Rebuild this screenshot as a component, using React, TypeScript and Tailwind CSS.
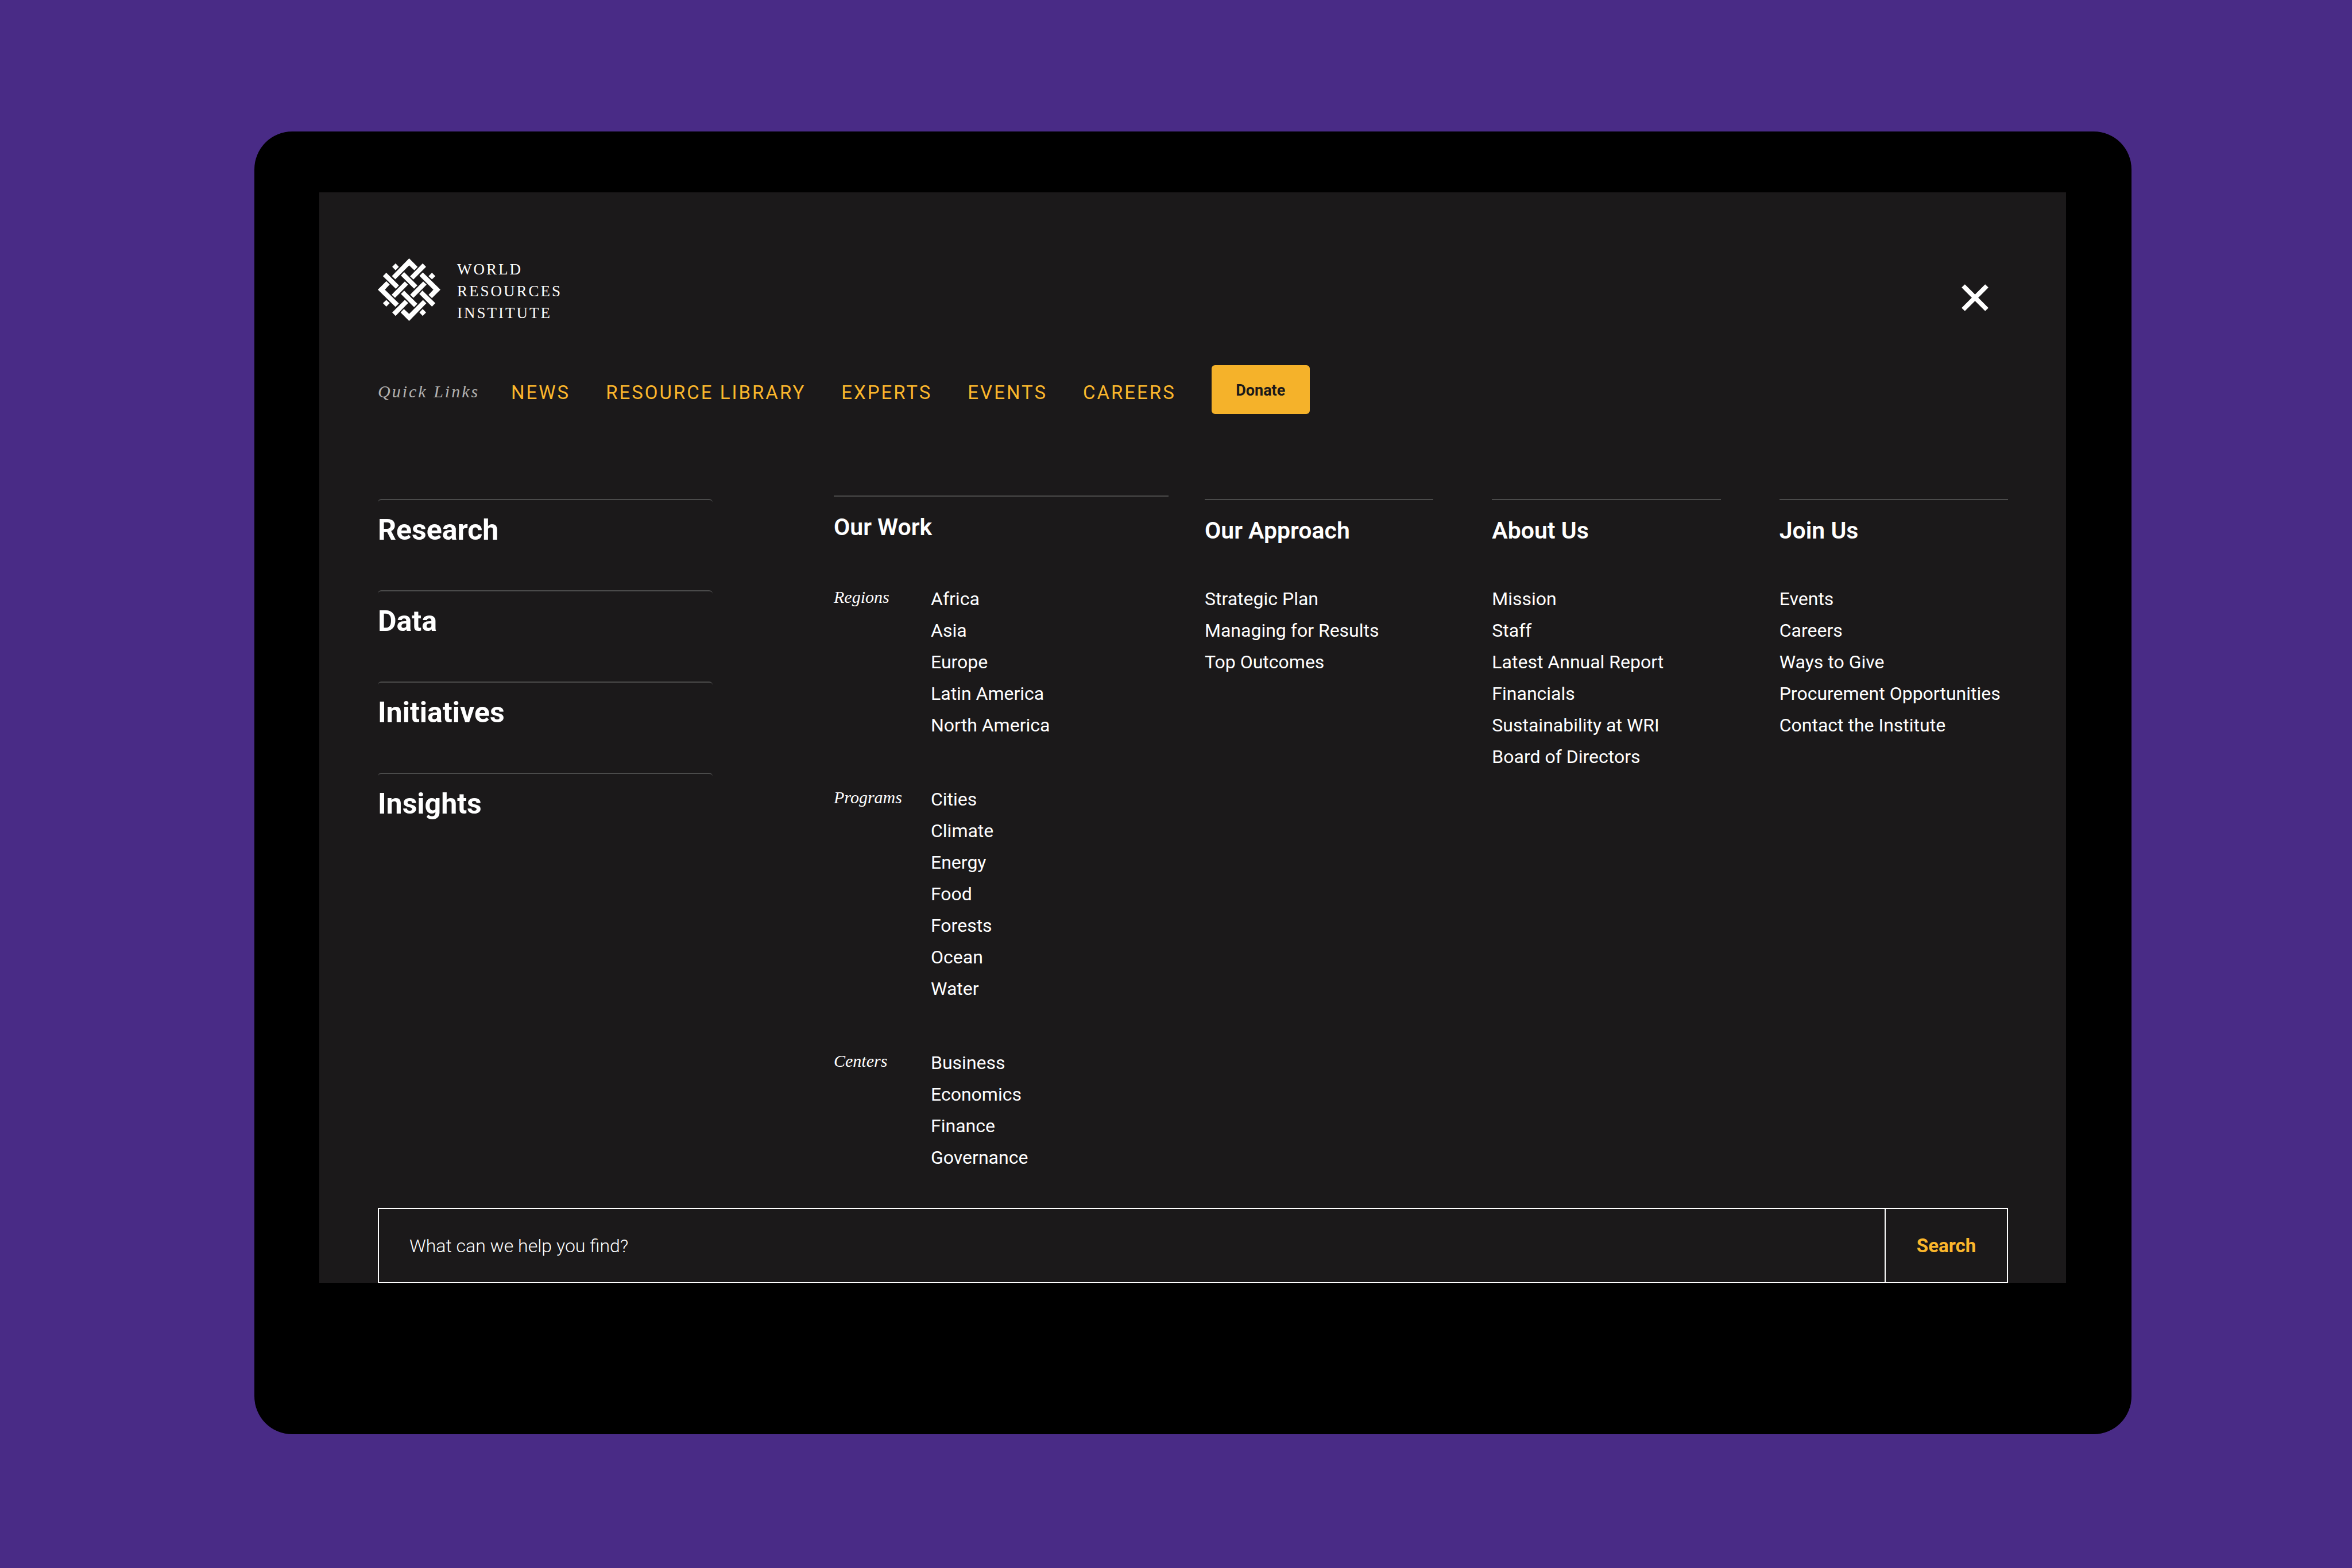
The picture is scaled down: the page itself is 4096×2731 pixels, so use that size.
const quickLinks = ['NEWS', 'RESOURCE LIBRARY', 'EXPERTS', 'EVENTS', 'CAREERS'];

const topics = ['Research', 'Data', 'Initiatives', 'Insights'];

const work = [
  { label: 'Regions', items: ['Africa', 'Asia', 'Europe', 'Latin America', 'North America'] },
  { label: 'Programs', items: ['Cities', 'Climate', 'Energy', 'Food', 'Forests', 'Ocean', 'Water'] },
  { label: 'Centers', items: ['Business', 'Economics', 'Finance', 'Governance'] },
];

const sections = [
  { title: 'Our Approach', items: ['Strategic Plan', 'Managing for Results', 'Top Outcomes'] },
  {
    title: 'About Us',
    items: ['Mission', 'Staff', 'Latest Annual Report', 'Financials', 'Sustainability at WRI', 'Board of Directors'],
  },
  {
    title: 'Join Us',
    items: ['Events', 'Careers', 'Ways to Give', 'Procurement Opportunities', 'Contact the Institute'],
  },
];

// One quarter of the woven mark; the other three are turns of it about the centre.
function WeaveQuarter({ angle }: { angle: number }) {
  return (
    <g transform={`rotate(${angle})`}>
      <path d="M0-240 65-175 40-149 0-186-106-79-132-105Z" />
      <path d="M104-201 130-175 33-78 7-102Z" />
      <path d="M-104-201-79-175-104-149-130-175Z" />
      <path d="M-38-134 63-33 38-8-63-108Z" />
    </g>
  );
}

function LogoMark() {
  return (
    <svg viewBox="-240 -240 480 480" className="size-[109px] fill-white" aria-hidden="true">
      {[0, 90, 180, 270].map((angle) => (
        <WeaveQuarter key={angle} angle={angle} />
      ))}
    </svg>
  );
}

function LinkList({ items }: { items: string[] }) {
  return (
    <ul className="text-[32px] leading-[55px] whitespace-nowrap">
      {items.map((item) => (
        <li key={item}>
          <a href="#">{item}</a>
        </li>
      ))}
    </ul>
  );
}

function SectionTitle({ children }: { children: string }) {
  return (
    <h2 className="border-t-2 border-[#4b4b4b] pt-[28px] text-[41px] leading-[50px] font-semibold">{children}</h2>
  );
}

export default function App() {
  return (
    <div className="min-h-screen bg-[#492b86] pt-[229px] pr-[384px] pb-[233px] pl-[443px] font-['Roboto',sans-serif] text-white">
      <div className="rounded-[66px] bg-black pt-[106px] pr-[114px] pb-[263px] pl-[113px]">
        <main className="bg-[#1b191a] pt-[115px] pr-[101px] pl-[102px]">
          <header className="flex items-start justify-between">
            <a
              href="#"
              className="flex items-start gap-[29px] font-['Liberation_Serif',serif] text-[27px] leading-[38px] tracking-[3px]"
            >
              <LogoMark />
              <span>
                WORLD
                <br />
                RESOURCES
                <br />
                INSTITUTE
              </span>
            </a>
            <button type="button" aria-label="Close menu" className="mt-[11px] p-[34px]">
              <svg viewBox="0 0 47 47" className="size-[47px] stroke-white" strokeWidth="8" aria-hidden="true">
                <path d="M3 3 44 44M44 3 3 44" />
              </svg>
            </button>
          </header>

          <div className="mt-[60px] flex items-center">
            <p className="w-[232px] pt-[6px] font-['Liberation_Serif',serif] text-[30px] tracking-[3px] text-[#b3b2b1] italic">
              Quick Links
            </p>
            <nav
              aria-label="Quick links"
              className="flex gap-[62px] pt-[11px] text-[33px] tracking-[3px] whitespace-nowrap text-[#fbb72c]"
            >
              {quickLinks.map((link) => (
                <a key={link} href="#">
                  {link}
                </a>
              ))}
            </nav>
            <button
              type="button"
              className="ml-[62px] h-[85px] w-[171px] rounded-[6px] bg-[#f5b22a] pt-[3px] text-[27px] font-bold text-[#1b191a]"
            >
              Donate
            </button>
          </div>

          <div className="mt-[142px] grid grid-cols-[794fr_646fr_1399fr]">
            <ul className="pt-[6px] pr-[211px]">
              {topics.map((topic) => (
                <li
                  key={topic}
                  className="rounded-[6px] border-t-2 border-[#4b4b4b] pt-[22px] pb-[75px] text-[50px] leading-[60px] font-bold"
                >
                  <a href="#">{topic}</a>
                </li>
              ))}
            </ul>

            <section className="pr-[63px]">
              <SectionTitle>Our Work</SectionTitle>
              <div className="mt-[73px] flex flex-col gap-[74px]">
                {work.map(({ label, items }) => (
                  <div key={label} className="flex">
                    <h3 className="w-[169px] font-['Liberation_Serif',serif] text-[30px] leading-[47px] italic">
                      {label}
                    </h3>
                    <LinkList items={items} />
                  </div>
                ))}
              </div>
            </section>

            <div className="grid grid-cols-3 gap-x-[102px] pt-[6px]">
              {sections.map(({ title, items }) => (
                <section key={title} className="flex flex-col gap-[67px]">
                  <SectionTitle>{title}</SectionTitle>
                  <LinkList items={items} />
                </section>
              ))}
            </div>
          </div>

          <form className="mt-[60px] flex h-[131px] border-2 border-white" onSubmit={(event) => event.preventDefault()}>
            <input
              type="search"
              aria-label="What can we help you find?"
              placeholder="What can we help you find?"
              className="min-w-0 flex-1 bg-transparent pl-[53px] text-[32px] font-light outline-none placeholder:text-white"
            />
            <button type="submit" className="w-[213px] border-l-2 border-white text-[33px] font-bold text-[#fbb72c]">
              Search
            </button>
          </form>
        </main>
      </div>
    </div>
  );
}
